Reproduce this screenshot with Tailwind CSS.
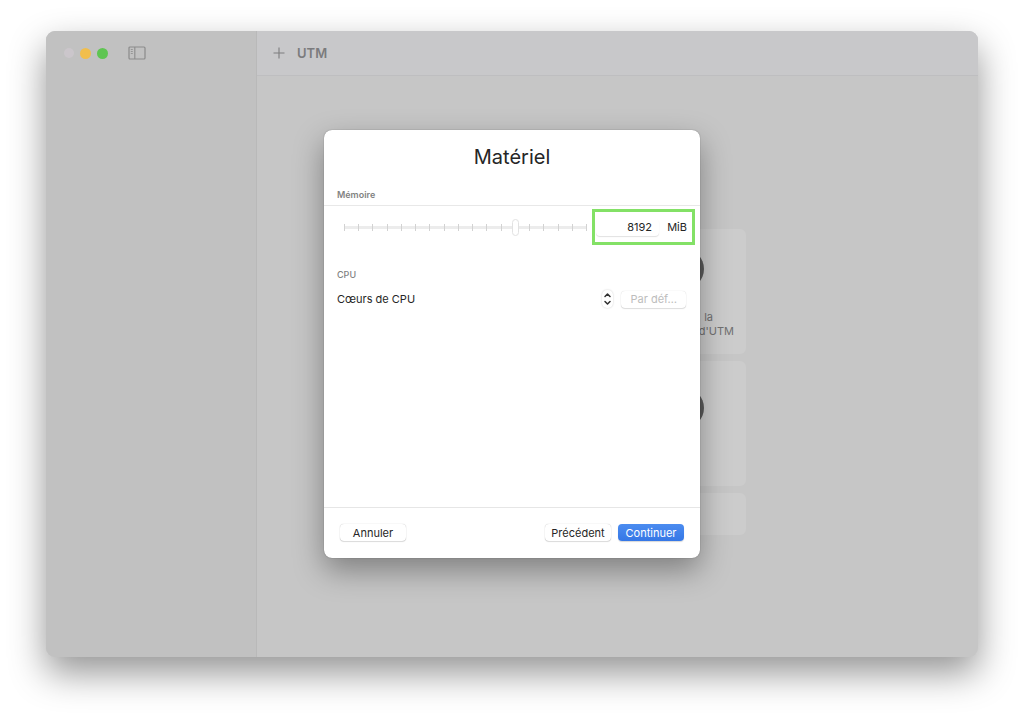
<!DOCTYPE html>
<html lang="fr">
<head>
  <meta charset="UTF-8" />
  <meta name="viewport" content="width=device-width, initial-scale=1.0" />
  <title>UTM</title>
  <script src="https://cdn.jsdelivr.net/npm/@tailwindcss/browser@4"></script>
</head>
<body class="flex min-h-screen bg-white px-[46px] pt-[31px] pb-[61px] font-['Inter','Liberation_Sans',sans-serif] text-[11px] leading-4 text-[#262626]">

  <!-- Main window -->
  <div class="relative flex flex-1 rounded-[9px] bg-[#c6c6c6] shadow-[0_16px_36px_rgba(0,0,0,0.42)]">

    <!-- Sidebar -->
    <aside class="w-[211px] shrink-0 rounded-l-[9px] border-r border-[#b9b9b9] bg-[#c1c1c1]">
      <div class="flex h-11 items-center pl-[18px]">
        <div class="flex gap-[6px]">
          <button class="size-[10px] rounded-full bg-[#cbc6cb]" aria-label="Fermer"></button>
          <button class="size-[11px] rounded-full bg-[#f1be4c]" aria-label="Réduire"></button>
          <button class="size-[11px] rounded-full bg-[#5fc552]" aria-label="Agrandir"></button>
        </div>
        <button class="ml-5" aria-label="Barre latérale">
          <svg width="18" height="14" viewBox="0 0 18 14" fill="none" stroke="#8b8b8b">
            <rect x="1" y="1" width="16" height="12" rx="1" stroke-width="1.2" />
            <path d="M6.8 1v12" stroke-width="1.1" />
            <path d="M2.8 3.5h2M2.8 5.5h2M2.8 7.5h2" stroke-width=".8" />
          </svg>
        </button>
      </div>
    </aside>

    <!-- Content -->
    <main class="flex flex-1 flex-col">
      <header class="flex h-[45px] items-center rounded-tr-[9px] border-b border-[#bebec0] bg-[#c8c8ca] pl-4">
        <button aria-label="Ajouter">
          <svg width="12" height="12" viewBox="0 0 12 12" fill="none" stroke="#7d7d7f" stroke-width="1.1">
            <path d="M6 .5v11M.5 6h11" />
          </svg>
        </button>
        <h1 class="ml-3 text-[13px] font-semibold text-[#7b7b7d]">UTM</h1>
      </header>
      <div class="flex flex-1 flex-col items-center pt-[153px]">
        <div class="grid grid-cols-[125px_125px] gap-[7px] text-[#717171]">
          <div class="h-[125px] rounded-md bg-[#cccccc]"></div>
          <div class="flex h-[125px] flex-col items-center rounded-md bg-[#cccccc] pt-5">
            <div class="size-10 rounded-full bg-[#5a5a5a]"></div>
            <p class="mt-[21px] w-full pr-3 text-right leading-[14px]"><span class="pr-[21px]">la</span><br />d'UTM</p>
          </div>
          <div class="h-[125px] rounded-md bg-[#cccccc]"></div>
          <div class="flex h-[125px] flex-col items-center rounded-md bg-[#cccccc] pt-[27px]">
            <div class="size-10 rounded-full bg-[#5a5a5a]"></div>
          </div>
          <div class="h-[42px] rounded-md bg-[#cccccc]"></div>
          <div class="h-[42px] rounded-md bg-[#cccccc]"></div>
        </div>
      </div>
    </main>

    <!-- Sheet -->
    <div class="absolute inset-0 flex items-center justify-center">
      <form class="flex min-h-[428px] w-[376px] flex-col rounded-[8px] bg-white shadow-[0_12px_30px_rgba(0,0,0,0.36),0_0_1px_rgba(0,0,0,0.5)]">
        <h2 class="pt-[13px] text-center text-[20px] leading-7">Matériel</h2>

        <label for="memory" class="mt-4 px-[13px] text-[9px] font-semibold text-[#828282]">Mémoire</label>
        <div class="mt-[2px] flex items-center border-t border-[#e8e8e8] pt-[3px] pr-[5px] pl-[17px]">
          <div class="grid flex-1 items-center">
            <div class="col-start-1 row-start-1 mx-[3px] flex h-[7px] items-center justify-between bg-[linear-gradient(#ececec,#ececec)] bg-[length:100%_3px] bg-center bg-no-repeat" id="ticks"></div>
            <input id="memory" type="range" min="0" max="17" value="12" class="col-start-1 row-start-1 m-0 h-[18px] w-full appearance-none bg-transparent [&::-webkit-slider-thumb]:h-[17px] [&::-webkit-slider-thumb]:w-[7px] [&::-webkit-slider-thumb]:appearance-none [&::-webkit-slider-thumb]:rounded-full [&::-webkit-slider-thumb]:border [&::-webkit-slider-thumb]:border-[#e2e2e2] [&::-webkit-slider-thumb]:bg-white" />
          </div>
          <div class="ml-[2px] flex h-9 w-[103px] items-center justify-between border-[3px] border-[#83e166] pr-[5px] pl-px">
            <input type="text" value="8192" aria-label="Mémoire en MiB" class="h-[17px] w-[63px] rounded-[4px] bg-white pr-[7px] text-right shadow-[0_1px_1px_rgba(0,0,0,0.12)]" />
            <span>MiB</span>
          </div>
        </div>

        <h3 class="mt-[22px] px-[13px] text-[9px] font-medium text-[#828282]">CPU</h3>
        <div class="mt-[7px] flex items-center pr-[14px] pl-[13px]">
          <label for="cores">Cœurs de CPU</label>
          <button type="button" class="ml-auto flex h-[18px] w-[11px] items-center justify-center rounded-[5px] shadow-[0_0_2px_rgba(0,0,0,0.2)]" aria-label="Modifier le nombre de cœurs">
            <svg width="9" height="14" viewBox="0 0 9 14" fill="none" stroke="#303030" stroke-width="1.5" stroke-linecap="round" stroke-linejoin="round">
              <path d="M2 4.5 4.5 2 7 4.5M2 9.5 4.5 12 7 9.5" />
            </svg>
          </button>
          <input id="cores" type="text" placeholder="Par déf…" class="ml-2 h-[17px] w-[65px] rounded-[4px] bg-white pr-[9px] text-right shadow-[0_0_1px_rgba(0,0,0,0.2),0_1px_1px_rgba(0,0,0,0.12)] placeholder:text-[#bdbdbd]" />
        </div>

        <div class="mt-auto flex h-[51px] items-center border-t border-[#e6e6e6] px-4 pb-px">
          <button type="button" class="h-[17px] w-[66px] rounded-[4px] bg-white shadow-[0_0_1px_rgba(0,0,0,0.3),0_1px_1px_rgba(0,0,0,0.12)]">Annuler</button>
          <button type="button" class="ml-auto h-[17px] w-[66px] rounded-[4px] bg-white shadow-[0_0_1px_rgba(0,0,0,0.3),0_1px_1px_rgba(0,0,0,0.12)]">Précédent</button>
          <button type="submit" class="ml-[7px] h-[17px] w-[66px] rounded-[4px] bg-linear-to-b from-[#4b8cf0] to-[#3577e6] text-white shadow-[0_1px_1px_rgba(0,0,0,0.16)]">Continuer</button>
        </div>
      </form>
    </div>
  </div>

  <script>
    // One tick per memory step
    const ticks = document.getElementById("ticks");
    for (let i = 0; i < 18; i++) {
      const tick = document.createElement("span");
      tick.className = "h-[7px] w-px bg-[#d2d2d2]";
      ticks.appendChild(tick);
    }
  </script>
</body>
</html>
